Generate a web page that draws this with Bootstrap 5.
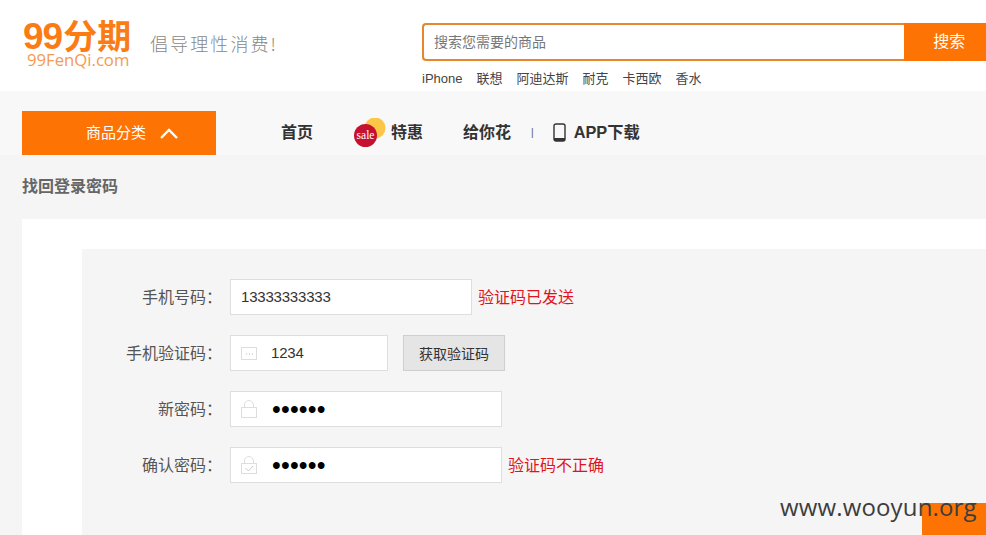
<!doctype html>
<html lang="zh"><head><meta charset="utf-8"><title>找回登录密码</title>
<link href="https://cdn.jsdelivr.net/npm/bootstrap@5.3.0/dist/css/bootstrap.min.css" rel="stylesheet">
<style>
html,body{height:535px;overflow:hidden}
body{background:#f5f5f5;font-family:"Liberation Sans","Noto Sans CJK SC",sans-serif;color:#333;position:relative;width:986px}
.top-head{background:#fff;height:91px;padding-left:23px}
.logo-box{width:109px;padding-top:22px;color:#fb7c14}
.logo-big{font:700 34px/30px "Liberation Sans","Noto Sans CJK SC",sans-serif;white-space:nowrap}
.logo-big b{font-size:37px;letter-spacing:-1px;margin-right:1px}
.logo-small{font:16.7px/16px "Open Sans",sans-serif;color:#f49a52;margin-left:4px;white-space:nowrap}
.slogan{font:300 18px/24px "Noto Sans CJK SC",serif;color:#888;letter-spacing:2.1px;margin-left:18px;margin-top:31px;white-space:nowrap}
.search-col{margin-left:auto;width:564px;padding-top:23px}
.search-row{height:38px}
.search-field{width:484px;height:38px;border:2px solid #e8862c;border-right:0;border-radius:4px 0 0 4px;background:#fff;font-size:14px;line-height:34px;padding-left:10px;color:#777}
.search-btn{width:82px;background:#fd7405;color:#fff;font-size:16px;line-height:38px;padding-left:29px;white-space:nowrap}
.hot-links{font-size:13px;line-height:17px;margin-top:9px;color:#444;gap:14px}
.nav-band{background:#f8f8f8;height:64px;padding:20px 0 0 22px}
.cat-btn{width:194px;height:44px;background:#fd7405;color:#fff;font-size:15px;line-height:44px;padding-left:64px;gap:13px}
.main-links{font-weight:700;font-size:16px;color:#333;line-height:44px;margin-left:65px}
.sale-ico{margin:7px 5px 0 41px}
.m-give{margin-left:40px}
.m-sep{font-size:10px;font-weight:400;margin-left:20px;color:#555}
.phone-ico{margin:12px 8px 0 19px}
.m-app{font-size:16.3px;line-height:43px}
.page-title{font-weight:700;font-size:16px;line-height:22px;color:#666;padding:21px 0 0 22px;height:64px}
.panel-white{background:#fff;margin-left:22px;padding:30px 0 0 60px;height:316px}
.panel-gray{background:#f5f5f5;height:286px;padding-top:30px}
.f-row{height:36px;margin-bottom:20px}
.f-label{width:148px;padding-right:8px;text-align:right;font-size:16px;line-height:34px;color:#555;white-space:nowrap}
.f-label i{font-style:normal;font-family:"Noto Sans CJK TC",sans-serif}
.f-input{height:36px;background:#fff;border:1px solid #dedede;font-size:15px;letter-spacing:-.2px;line-height:34px;color:#333}
.w-phone{width:242px;padding-left:10px}
.w-code{width:158px}
.w-pass{width:272px}
.msg{color:#e0141e;font-size:16px;line-height:37px;margin-left:6px;white-space:nowrap}
.ico{width:16px;height:18px;margin:0 14px 0 10px;flex:none}
.dots{font-size:25px;color:#000;letter-spacing:.2px;line-height:34px;margin-left:1px}
.get-code{width:102px;height:36px;margin-left:15px;background:#e5e5e5;border:1px solid #cfcfcf;font-size:14px;line-height:36px;text-align:center;color:#333}
.wm{position:absolute;left:780px;top:491px;font:24px/32px "Open Sans",sans-serif;color:#3d3d3d;white-space:nowrap;z-index:2;letter-spacing:.15px}
.corner{position:absolute;left:922px;top:503px;width:64px;height:32px;background:#fd7405}
</style></head><body>
<div class="top-head d-flex">
  <div class="logo-box"><div class="logo-big"><b>99</b>分期</div><div class="logo-small">99FenQi.com</div></div>
  <div class="slogan">倡导理性消费!</div>
  <div class="search-col">
    <div class="search-row d-flex"><div class="search-field">搜索您需要的商品</div><div class="search-btn">搜索</div></div>
    <div class="hot-links d-flex"><span>iPhone</span><span>联想</span><span>阿迪达斯</span><span>耐克</span><span>卡西欧</span><span>香水</span></div>
  </div>
</div>
<div class="nav-band d-flex">
  <div class="cat-btn d-flex"><span>商品分类</span><svg width="20" height="44" viewBox="0 0 20 44"><path d="M2 27l8-8 8 8" fill="none" stroke="#fff" stroke-width="2.4"/></svg></div>
  <div class="main-links d-flex"><span>首页</span>
    <svg class="sale-ico" width="32" height="30" viewBox="0 0 32 30"><circle cx="21" cy="10" r="10.500" fill="#fcc648"/><circle cx="11.500" cy="17.500" r="11.500" fill="#c5112f"/><text x="11.500" y="21" font-size="11.500" font-family="Liberation Serif" font-weight="400" fill="#fff" text-anchor="middle">sale</text></svg>
    <span>特惠</span><span class="m-give">给你花</span>
    <span class="m-sep">|</span>
    <svg class="phone-ico" width="13" height="19" viewBox="0 0 13 19"><rect x="1" y="1" width="11" height="17" rx="2" fill="none" stroke="#333" stroke-width="1.4"/><rect x="1" y="15" width="11" height="3" fill="#333"/></svg>
    <span class="m-app">APP下载</span></div>
</div>
<div class="page-title">找回登录密码</div>
<div class="panel-white"><div class="panel-gray">
  <div class="f-row d-flex"><div class="f-label">手机号码<i>：</i></div><div class="f-input w-phone">13333333333</div><div class="msg">验证码已发送</div></div>
  <div class="f-row d-flex"><div class="f-label">手机验证码<i>：</i></div><div class="f-input w-code d-flex align-items-center"><svg class="ico" viewBox="0 0 16 18"><rect x=".5" y="3.5" width="15" height="12" fill="none" stroke="#ddd"/><path d="M5 10h1M8 10h1M11 10h1" stroke="#bbb"/></svg><span>1234</span></div><div class="get-code">获取验证码</div></div>
  <div class="f-row d-flex"><div class="f-label">新密码<i>：</i></div><div class="f-input w-pass d-flex align-items-center"><svg class="ico" viewBox="0 0 16 18"><rect x=".5" y="7.5" width="15" height="10" fill="none" stroke="#ddd"/><path d="M3.500 7V5a4.500 4.500 0 0 1 9 0v2" fill="none" stroke="#ddd"/></svg><span class="dots">••••••</span></div></div>
  <div class="f-row d-flex"><div class="f-label">确认密码<i>：</i></div><div class="f-input w-pass d-flex align-items-center"><svg class="ico" viewBox="0 0 16 18"><rect x=".5" y="7.5" width="15" height="10" fill="none" stroke="#ddd"/><path d="M3.500 7V5a4.500 4.500 0 0 1 9 0v2" fill="none" stroke="#ddd"/><path d="M4.500 12l3 3 4.500-5" fill="none" stroke="#ccc"/></svg><span class="dots">••••••</span></div><div class="msg">验证码不正确</div></div>
</div></div>
<div class="corner"></div>
<div class="wm">www.wooyun.org</div>
<script src="https://cdn.jsdelivr.net/npm/bootstrap@5.3.0/dist/js/bootstrap.bundle.min.js"></script>
</body></html>
